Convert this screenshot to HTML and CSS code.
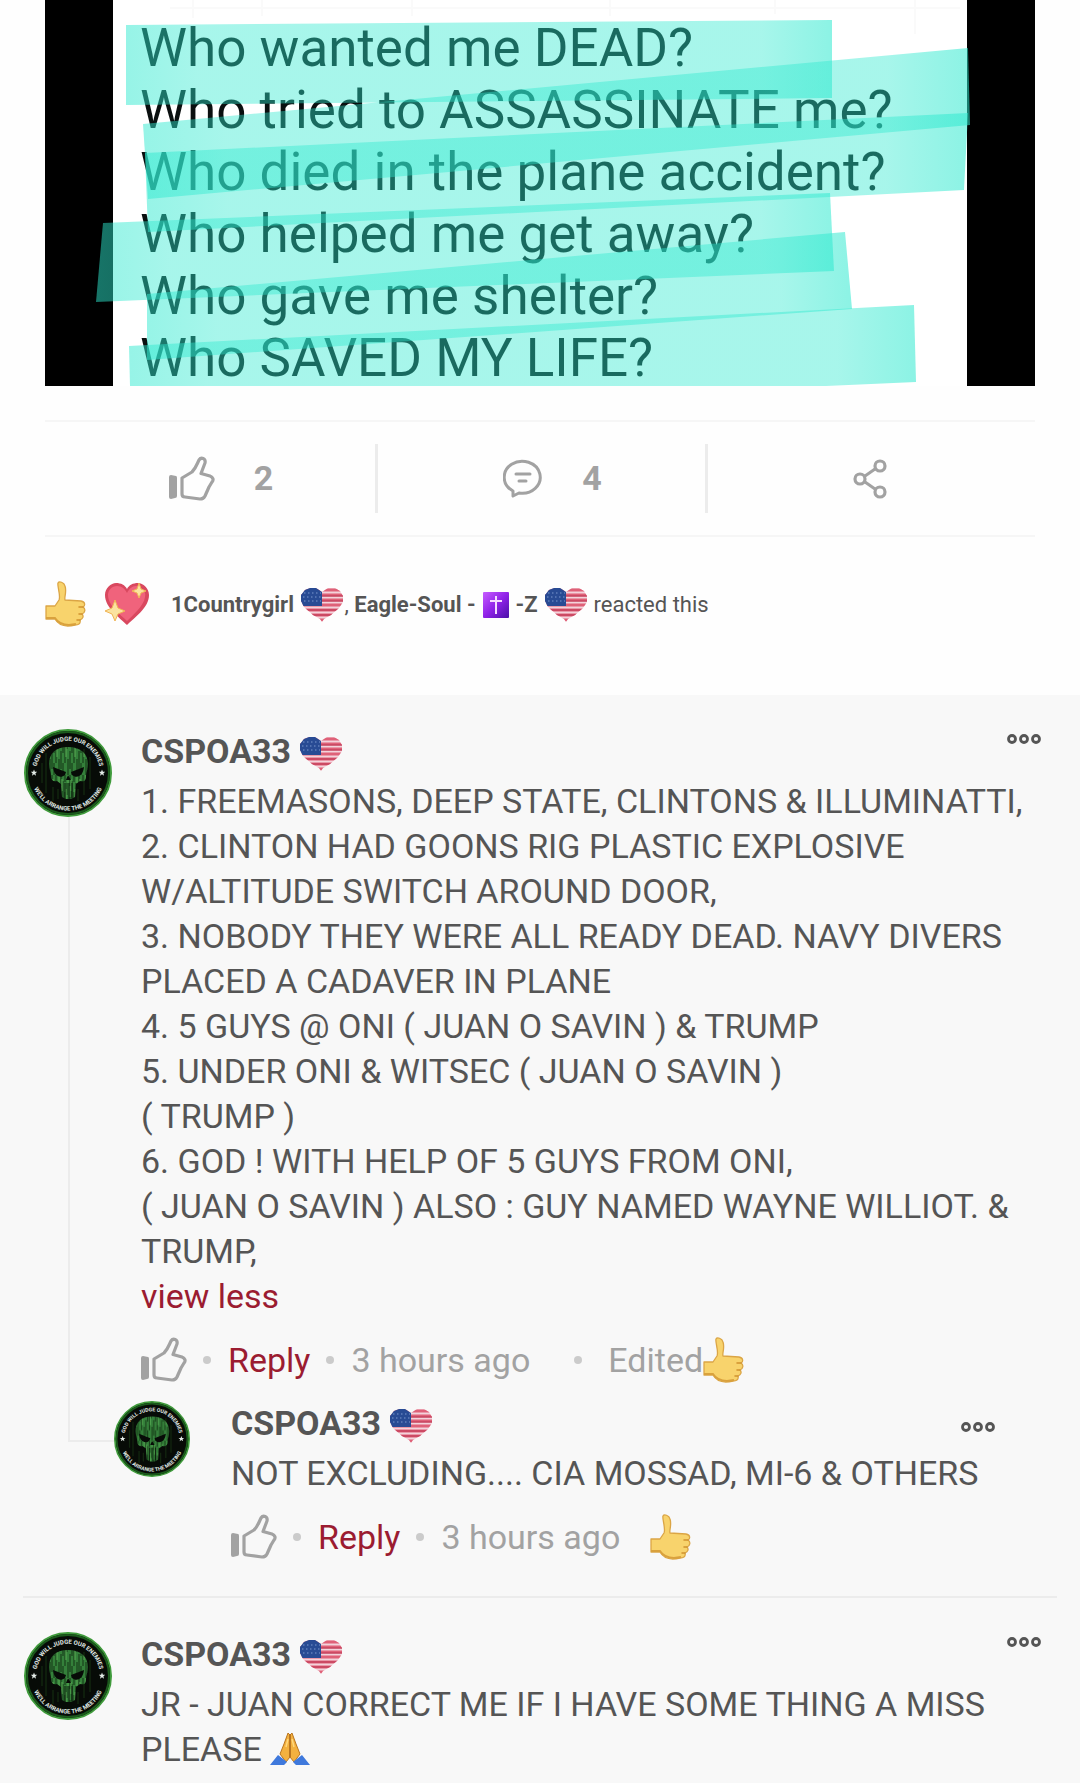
FILE: index.html
```
<!DOCTYPE html>
<html lang="en">
<head>
    <meta charset="UTF-8">
    <meta name="viewport" content="width=device-width, initial-scale=1.0">
    <title>Post comments</title>
    <link rel="stylesheet" href="styles.css">
</head>
<body>

<!-- Shared icons -->
<svg class="sprite" aria-hidden="true">
    <defs>
        <linearGradient id="marker" x1="0" x2="1" y1="0" y2="0">
            <stop offset="0" stop-color="#2ee9cf" stop-opacity=".5"/>
            <stop offset=".1" stop-color="#2ee9cf" stop-opacity=".42"/>
            <stop offset=".9" stop-color="#2ee9cf" stop-opacity=".42"/>
            <stop offset="1" stop-color="#2ee9cf" stop-opacity=".55"/>
        </linearGradient>
        <linearGradient id="crossBg" x1="0" x2="1" y1="0" y2="1">
            <stop offset="0" stop-color="#c65cff"/>
            <stop offset=".5" stop-color="#9022e8"/>
            <stop offset="1" stop-color="#4a10a8"/>
        </linearGradient>
        <pattern id="matrix" width="9" height="46" patternUnits="userSpaceOnUse">
            <rect width="9" height="46" fill="#34803a"/>
            <path d="M1 0V11M3 6V24M5 0V7M5 17V34M7 8V20M1 22V40M8 30V46M3 34V46" stroke="#173f19" stroke-width="1.200"/>
            <path d="M2 4V16M6 14V28M8 0V8" stroke="#57ab52" stroke-width="1"/>
        </pattern>
        <clipPath id="heartClip">
            <path d="M21 34 19 31 12 27 3 19 0 13V7L4 2 9 0H15L21 4 27 0H34L39 3 42 8V14L38 20 30 27 23 31Z"/>
        </clipPath>
        <path id="arcTop" d="M14 55A32 32 0 1 1 74 55"/>
        <path id="arcBottom" d="M8 36A37 37 0 1 0 80 36"/>
    </defs>

    <symbol id="like" viewBox="0 0 46 46">
        <path d="M0 21Q0 19 2 19L7 20Q8 20 8 22V40Q8 42 6 42L2 43Q0 43 0 41Z" fill="#a2a2a2"/>
        <path d="M13 22 23 16C27 12 28 8 30 4 32 1 37 2 36 7L32 17.500 41 20C44 21 45 24 43 26L40 31 36 40C35 42 34 43 31 43L16 41Q13 41 13 38Z" fill="none" stroke="#a2a2a2" stroke-width="3.200" stroke-linejoin="round"/>
    </symbol>

    <symbol id="comment" viewBox="0 0 40 40">
        <path d="M10 32A18 16 0 1 1 16 34L10 37Z" fill="none" stroke="#a2a2a2" stroke-width="3" stroke-linejoin="round"/>
        <path d="M13 15H27M16 22H23" stroke="#a2a2a2" stroke-width="3" stroke-linecap="round"/>
    </symbol>

    <symbol id="share" viewBox="0 0 34 40">
        <path d="M12 17 22 10M12 23 22 30" stroke="#a2a2a2" stroke-width="3"/>
        <g fill="none" stroke="#a2a2a2" stroke-width="3.200">
            <circle cx="7" cy="20" r="5"/>
            <circle cx="27" cy="7" r="5"/>
            <circle cx="27" cy="33" r="5"/>
        </g>
    </symbol>

    <symbol id="dots" viewBox="0 0 34 10">
        <g fill="none" stroke="#555" stroke-width="2.800">
            <circle cx="5" cy="5" r="3.500"/>
            <circle cx="17" cy="5" r="3.500"/>
            <circle cx="29" cy="5" r="3.500"/>
        </g>
    </symbol>

    <symbol id="flag" viewBox="0 0 42 34">
        <g clip-path="url(#heartClip)">
            <rect width="42" height="34" fill="#f3d3db"/>
            <path d="M0 2H42M0 7H42M0 12H42M0 17H42M0 22H42M0 27H42M0 32H42" stroke="#df6178" stroke-width="3"/>
            <path d="M0 8H42M0 13H42M0 22H42M0 27H42" stroke="#b93550" stroke-width="1"/>
            <rect width="21" height="18" fill="#284b94"/>
            <path d="M3 5H20M2 9H20M3 13H20" stroke="#5f7fbb" stroke-width="1.500" stroke-dasharray="1.500 2.500"/>
        </g>
    </symbol>

    <symbol id="thumb" viewBox="0 0 42 46">
        <path d="M1 25H10L14 19C16 15 12 5 13 2 14 0 19 1 20 5 22 11 19 16 20 19L36 20C41 21 40 25 38 26 41 28 40 32 37 33 39 35 38 38 35 39 36 43 33 44 30 44 22 46 14 45 10 38H1Z" fill="#f8d36c" stroke="#dba545" stroke-width="1.300" stroke-linejoin="round"/>
        <path d="M34 26H38M34 33H37M32 39H35" fill="none" stroke="#cf922e" stroke-width="1.500" stroke-linecap="round"/>
        <path d="M1 37H10C14 43 22 45 31 43" fill="none" stroke="#d9a13d" stroke-width="1.800"/>
    </symbol>

    <symbol id="spark" viewBox="0 0 46 44">
        <path d="M23 43C16 36 1 26 1 13 1 6 7 1 12 1 17 1 21 3 23 7 25 3 29 1 34 1 39 1 45 6 45 13 45 26 30 36 23 43Z" fill="#d9485f"/>
        <path d="M23 39C17 33 4 24 4 13 4 8 8 4 13 4 18 4 21 7 23 11 25 7 28 4 32 4 35 4 43 8 41 15 40 24 28 34 23 39Z" fill="#f0637c"/>
        <path d="M35 1 37 7 42 9 37 11 35 16 33 11 28 9 33 7ZM11 18 14 26 21 29 14 32 11 39 8 32 1 29 8 26Z" fill="#fbe3a0" stroke="#f0b455" stroke-width="1"/>
    </symbol>

    <symbol id="cross" viewBox="0 0 26 26">
        <rect width="26" height="26" rx="1" fill="url(#crossBg)"/>
        <path d="M13 4V22M7 9H19" stroke="#f6dcff" stroke-width="2"/>
    </symbol>

    <symbol id="pray" viewBox="0 0 40 34">
        <path d="M18 1 14 12 10 22 16 30 20 25 24 30 30 22 26 12 22 1 20 3Z" fill="#f3b13f" stroke="#b9741f" stroke-width="1" stroke-linejoin="round"/>
        <path d="M20 3V25" stroke="#a5631a" stroke-width="1.500"/>
        <path d="M18 7 16 15M22 7 24 15" stroke="#ffd77c" stroke-width="1.500"/>
        <path d="M0 33 8 23 17 30 14 33ZM40 33 32 23 23 30 26 33Z" fill="#3f79dc"/>
    </symbol>

    <symbol id="avatar" viewBox="0 0 88 88">
        <circle cx="44" cy="44" r="43" fill="#070b07" stroke="#3f9a3b" stroke-width="2"/>
        <circle cx="44" cy="44" r="41" fill="none" stroke="#1b5a1c" stroke-width="2"/>
        <path d="M22 24V64M29 58V72M34 60V70M54 60V72M60 20V66M66 28V60M18 34V54" stroke="#12260f" stroke-width="1.500"/>
        <path d="M44 18C31 18 25 25 25 35 25 40 27 43 27 47 27 51 29 53 33 52L37 55 38 68 42 70H47L51 68 52 55 56 52C61 53 62 51 62 47 62 43 64 40 64 35 64 25 57 18 44 18Z" fill="url(#matrix)"/>
        <path d="M29 38 42 43 41 46C36 50 30 47 29 38ZM60 38 47 43 48 46C53 50 59 47 60 38ZM44 46 42 51H47Z" fill="#070b07"/>
        <path d="M41 54V70M45 54V70M48 54V69" stroke="#0b1a0b" stroke-width="1"/>
        <path d="M10 40.500 10.900 42.800H13.300L11.400 44.300 12 46.700 10 45.300 8 46.700 8.600 44.300 6.700 42.800H9.100ZM78 40.500 78.900 42.800H81.300L79.400 44.300 80 46.700 78 45.300 76 46.700 76.600 44.300 74.700 42.800H77.100Z" fill="#e3ebe7"/>
        <text class="avatar-text"><textPath href="#arcTop" startOffset="50%">GOD WILL JUDGE OUR ENEMIES</textPath></text>
        <text class="avatar-text"><textPath href="#arcBottom" startOffset="50%">WE'LL ARRANGE THE MEETING</textPath></text>
    </symbol>
</svg>

<main class="post">
    <!-- Post picture with marker strokes -->
    <svg class="picture" viewBox="45 0 990 386" role="img" aria-label="Highlighted list of questions">
        <rect x="45" width="990" height="386" fill="#000"/>
        <rect x="113" width="854" height="386" fill="#fff"/>
        <path d="M193 0V18M262 0V16M412 0V16M610 0V16M775 0V14M915 0V34M170 8H960" stroke="#fafafa" stroke-width="2"/>
        <g class="picture-text">
            <text x="140" y="66">Who wanted me DEAD?</text>
            <text x="140" y="128">Who tried to ASSASSINATE me?</text>
            <text x="140" y="190">Who died in the plane accident?</text>
            <text x="140" y="252">Who helped me get away?</text>
            <text x="140" y="314">Who gave me shelter?</text>
            <text x="140" y="376">Who SAVED MY LIFE?</text>
        </g>
        <g fill="url(#marker)">
            <path d="M126 25 832 20V98L126 105Z"/>
            <path d="M143 124 968 48 970 125 148 199Z"/>
            <path d="M145 153 968 113 964 190 148 232Z"/>
            <path d="M103 223 830 193 834 271 96 302Z"/>
            <path d="M147 294 845 232 852 309 147 360Z"/>
            <path d="M129 346 914 305 916 382 826 386H130Z"/>
        </g>
    </svg>

    <div class="stats">
        <button class="stat" aria-label="Like"><svg class="icon-like"><use href="#like"/></svg><span>2</span></button>
        <button class="stat" aria-label="Comments"><svg class="icon-comment"><use href="#comment"/></svg><span>4</span></button>
        <button class="stat share" aria-label="Share"><svg class="icon-share"><use href="#share"/></svg></button>
    </div>

    <div class="reactions">
        <svg class="thumb"><use href="#thumb"/></svg>
        <svg class="spark"><use href="#spark"/></svg>
        <p class="reacted">
            <a href="#">1Countrygirl <svg class="flag"><use href="#flag"/></svg></a>, <a href="#">Eagle-Soul - <svg class="cross"><use href="#cross"/></svg> -Z <svg class="flag"><use href="#flag"/></svg></a> reacted this
        </p>
    </div>
</main>

<section class="comments">
    <article class="comment">
        <div class="side">
            <svg class="avatar"><use href="#avatar"/></svg>
            <div class="thread"></div>
        </div>
        <div class="body">
            <div class="head">
                <a class="name" href="#">CSPOA33 <svg class="flag"><use href="#flag"/></svg></a>
                <button class="more" aria-label="More"><svg><use href="#dots"/></svg></button>
            </div>
            <p class="text">
                1. FREEMASONS, DEEP STATE, CLINTONS &amp; ILLUMINATTI,<br>
                2. CLINTON HAD GOONS RIG PLASTIC EXPLOSIVE W/ALTITUDE SWITCH AROUND DOOR,<br>
                3. NOBODY THEY WERE ALL READY DEAD. NAVY DIVERS PLACED A CADAVER IN PLANE<br>
                4. 5 GUYS @ ONI ( JUAN O SAVIN ) &amp; TRUMP<br>
                5. UNDER ONI &amp; WITSEC ( JUAN O SAVIN )<br>
                ( TRUMP )<br>
                6. GOD ! WITH HELP OF 5 GUYS FROM ONI,<br>
                ( JUAN O SAVIN ) ALSO : GUY NAMED WAYNE WILLIOT. &amp; TRUMP,<br>
                <a class="link" href="#">view less</a>
            </p>
            <div class="actions">
                <button aria-label="Like"><svg class="icon-like"><use href="#like"/></svg></button>
                <i class="dot"></i>
                <button class="link">Reply</button>
                <i class="dot"></i>
                <span>3 hours ago</span>
                <span class="edited"><i class="dot"></i>Edited<svg class="thumb"><use href="#thumb"/></svg></span>
            </div>

            <article class="comment reply">
                <svg class="avatar"><use href="#avatar"/></svg>
                <div class="body">
                    <div class="head">
                        <a class="name" href="#">CSPOA33 <svg class="flag"><use href="#flag"/></svg></a>
                        <button class="more" aria-label="More"><svg><use href="#dots"/></svg></button>
                    </div>
                    <p class="text">NOT EXCLUDING.... CIA MOSSAD, MI-6 &amp; OTHERS</p>
                    <div class="actions">
                        <button aria-label="Like"><svg class="icon-like"><use href="#like"/></svg></button>
                        <i class="dot"></i>
                        <button class="link">Reply</button>
                        <i class="dot"></i>
                        <span>3 hours ago</span>
                        <svg class="thumb"><use href="#thumb"/></svg>
                    </div>
                </div>
            </article>
        </div>
    </article>

    <article class="comment">
        <div class="side">
            <svg class="avatar"><use href="#avatar"/></svg>
        </div>
        <div class="body">
            <div class="head">
                <a class="name" href="#">CSPOA33 <svg class="flag"><use href="#flag"/></svg></a>
                <button class="more" aria-label="More"><svg><use href="#dots"/></svg></button>
            </div>
            <p class="text">JR - JUAN CORRECT ME IF I HAVE SOME THING A MISS PLEASE <svg class="pray"><use href="#pray"/></svg></p>
        </div>
    </article>
</section>

</body>
</html>
```
FILE: styles.css
```
* {
    box-sizing: border-box;
}
body {
    margin: 0;
    background-color: #fefefe;
    color: #555;
    font-family: Roboto, sans-serif;
    font-size: 34px;
    line-height: 45px;
}
a {
    color: inherit;
    text-decoration: none;
}
p {
    margin: 0;
}
button {
    display: flex;
    align-items: center;
    padding: 0;
    border: 0;
    background: none;
    color: inherit;
    font: inherit;
    cursor: pointer;
}
svg {
    flex-shrink: 0;
}
.sprite {
    position: absolute;
    width: 0;
    height: 0;
}

/* Post */
.post {
    padding: 0 45px;
}
.picture {
    display: block;
    width: 100%;
    overflow: visible;
}
.picture-text {
    font-size: 53px;
    fill: #0a0f0f;
}
.stats {
    display: grid;
    grid-template-columns: 333fr 330fr 327fr;
    margin-top: 34px;
    padding: 22px 0;
    border-top: 2px solid #f6f6f6;
    border-bottom: 2px solid #f6f6f6;
}
.stat {
    justify-content: center;
    gap: 39px;
    height: 69px;
    padding-left: 22px;
    border-right: 3px solid #ececec;
    color: #a2a2a2;
    font-weight: bold;
}
.share {
    padding-left: 0;
    padding-right: 4px;
    border-right: 0;
}
.icon-like {
    width: 46px;
    height: 46px;
}
.icon-comment {
    width: 40px;
    height: 40px;
}
.icon-share {
    width: 34px;
    height: 40px;
}
.reactions {
    display: flex;
    align-items: center;
    height: 158px;
    padding-bottom: 24px;
}
.thumb {
    width: 42px;
    height: 46px;
}
.spark {
    width: 46px;
    height: 44px;
    margin: 0 21px 0 17px;
}
.reacted {
    font-size: 22px;
}
.reacted a {
    font-weight: bold;
}
.reacted svg {
    margin: 0 1px 0 2px;
}
.flag {
    width: 42px;
    height: 34px;
    vertical-align: -8px;
}
.reacted .flag {
    vertical-align: -10px;
}
.cross {
    width: 26px;
    height: 26px;
    vertical-align: -6px;
}

/* Comments */
.comments {
    padding: 0 23px 11px;
    background-color: #f8f8f8;
}
.comment {
    display: flex;
    padding: 34px 0 18px;
}
.comment + .comment {
    padding-bottom: 0;
    border-top: 2px solid #ececec;
}
.side {
    display: flex;
    flex-direction: column;
    width: 118px;
}
.avatar {
    width: 90px;
    height: 88px;
}
.avatar-text {
    fill: #e3ebe7;
    font-size: 6px;
    font-weight: bold;
    text-anchor: middle;
}
.thread {
    flex: 1;
    width: 60px;
    margin: 0 0 136px 45px;
    border-left: 2px solid #ececec;
    border-bottom: 2px solid #ececec;
}
.body {
    flex: 1;
}
.head {
    display: flex;
    justify-content: space-between;
    height: 50px;
    padding-right: 16px;
}
.name {
    font-weight: bold;
}
.more {
    height: 20px;
}
.more svg {
    width: 34px;
    height: 10px;
}
.link {
    color: #9b1c31;
}
.actions {
    display: flex;
    align-items: center;
    height: 82px;
    color: #a2a2a2;
}
.dot {
    width: 8px;
    height: 8px;
    margin: 0 17px 0 16px;
    border-radius: 50%;
    background-color: #cbcbcb;
}
.actions > .thumb {
    margin-left: 30px;
}
.edited {
    display: flex;
    align-items: center;
    margin-left: 28px;
}
.edited .dot {
    margin-right: 26px;
}
.reply {
    margin-left: -27px;
    padding: 0;
}
.reply .avatar {
    width: 76px;
    height: 76px;
    margin-right: 41px;
}
.reply .head {
    padding-right: 62px;
}
.reply .more {
    height: 52px;
}
.pray {
    width: 40px;
    height: 34px;
    vertical-align: -5px;
}
```
